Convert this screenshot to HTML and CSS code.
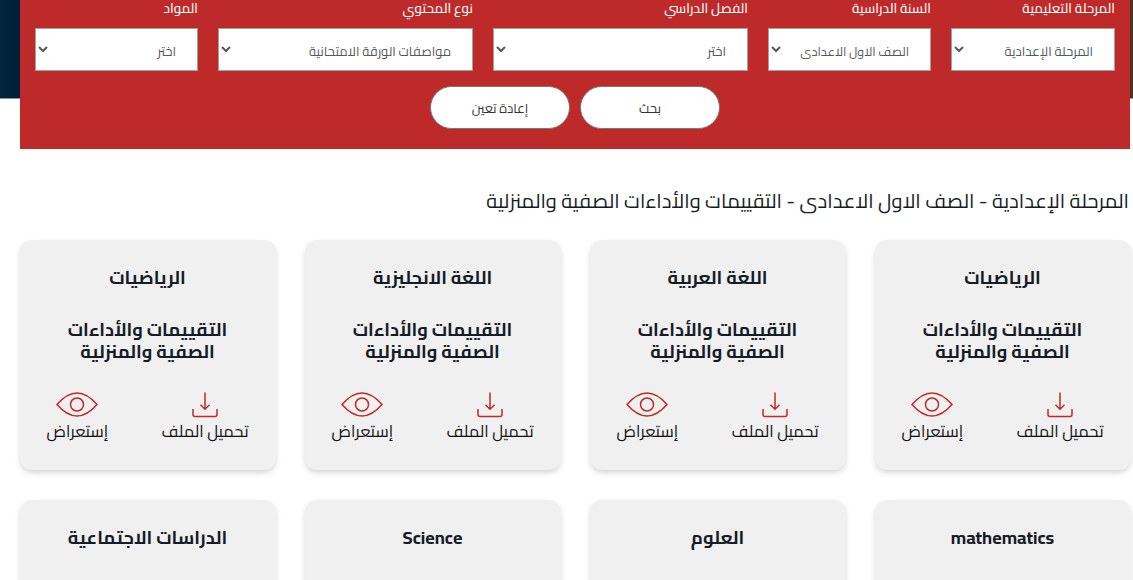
FILE: index.html
```html
<!DOCTYPE html>
<html lang="ar" dir="rtl">
<head>
  <meta charset="UTF-8">
  <meta name="viewport" content="width=device-width, initial-scale=1.0">
  <title>التقييمات والأداءات الصفية والمنزلية</title>
  <link rel="stylesheet" href="styles.css">
</head>
<body>
  <svg class="sprite" width="0" height="0">
    <symbol id="download" viewBox="0 0 26 26">
      <path d="M13 0.5V17M8.5 12.8L13 17.3L17.5 12.8M1 17V22.5Q1 24.5 3 24.5H23Q25 24.5 25 22.5V17"/>
    </symbol>
    <symbol id="eye" viewBox="0 0 42 26">
      <path d="M1 12.5Q11 1 21 1Q31 1 41 12.5Q31 24 21 24Q11 24 1 12.5Z"/>
      <circle cx="21" cy="12.5" r="6.5"/>
    </symbol>
  </svg>

  <!-- البحث -->
  <div class="hero">
    <form class="search">
      <div class="fields">
        <div class="field">
          <label>المرحلة التعليمية</label>
          <select><option>المرحلة الإعدادية</option></select>
        </div>
        <div class="field">
          <label>السنة الدراسية</label>
          <select class="year"><option>الصف الاول الاعدادى</option></select>
        </div>
        <div class="field">
          <label>الفصل الدراسي</label>
          <select><option>اختر</option></select>
        </div>
        <div class="field">
          <label>نوع المحتوي</label>
          <select><option>مواصفات الورقة الامتحانية</option></select>
        </div>
        <div class="field">
          <label>المواد</label>
          <select><option>اختر</option></select>
        </div>
      </div>
      <div class="buttons">
        <button type="button">بحث</button>
        <button type="button">إعادة تعين</button>
      </div>
    </form>
  </div>

  <!-- النتائج -->
  <h1 class="title">المرحلة الإعدادية - الصف الاول الاعدادى - التقييمات والأداءات الصفية والمنزلية</h1>

  <div class="grid">
    <div class="card">
      <h2>الرياضيات</h2>
      <h3>التقييمات والأداءات الصفية والمنزلية</h3>
      <div class="actions">
        <a class="download"><svg width="26" height="26"><use href="#download"/></svg><span>تحميل الملف</span></a>
        <a class="view"><svg width="42" height="26"><use href="#eye"/></svg><span>إستعراض</span></a>
      </div>
    </div>
    <div class="card">
      <h2>اللغة العربية</h2>
      <h3>التقييمات والأداءات الصفية والمنزلية</h3>
      <div class="actions">
        <a class="download"><svg width="26" height="26"><use href="#download"/></svg><span>تحميل الملف</span></a>
        <a class="view"><svg width="42" height="26"><use href="#eye"/></svg><span>إستعراض</span></a>
      </div>
    </div>
    <div class="card">
      <h2>اللغة الانجليزية</h2>
      <h3>التقييمات والأداءات الصفية والمنزلية</h3>
      <div class="actions">
        <a class="download"><svg width="26" height="26"><use href="#download"/></svg><span>تحميل الملف</span></a>
        <a class="view"><svg width="42" height="26"><use href="#eye"/></svg><span>إستعراض</span></a>
      </div>
    </div>
    <div class="card">
      <h2>الرياضيات</h2>
      <h3>التقييمات والأداءات الصفية والمنزلية</h3>
      <div class="actions">
        <a class="download"><svg width="26" height="26"><use href="#download"/></svg><span>تحميل الملف</span></a>
        <a class="view"><svg width="42" height="26"><use href="#eye"/></svg><span>إستعراض</span></a>
      </div>
    </div>
    <div class="card"><h2>mathematics</h2></div>
    <div class="card"><h2>العلوم</h2></div>
    <div class="card"><h2>Science</h2></div>
    <div class="card"><h2>الدراسات الاجتماعية</h2></div>
  </div>
</body>
</html>
```
FILE: styles.css
```css
* {
  margin: 0;
  padding: 0;
  box-sizing: border-box;
}

body {
  height: 580px;
  overflow: hidden;
  background: #fff;
  color: #161c26;
  font-family: 'Cairo', 'DejaVu Sans', sans-serif;
}

.sprite {
  display: block;
}

/* البحث */
.hero {
  height: 149px;
  padding: 0 3px 0 20px;
  background: linear-gradient(to right, #00263d, #002036 20px, #4b3528 1120px) no-repeat top / 100% 98.5px;
}

.search {
  height: 149px;
  padding: 0 15px;
  background: #be2a29;
}

.fields {
  display: grid;
  grid-template-columns: 164fr 163fr 255fr 255fr 163fr;
  gap: 20px;
}

.field label {
  display: block;
  height: 28px;
  line-height: 18px;
  font-size: 13.4px;
  font-weight: 500;
  color: #fff;
  white-space: nowrap;
}

.field select {
  display: block;
  width: 100%;
  height: 43px;
  padding: 3px 17px 0 0;
  border: 1px solid #a5a0a0;
  border-radius: 0;
  background: #fff;
  color: #55595c;
  font-family: inherit;
  font-size: 13px;
}

.field .year {
  font-size: 12.5px;
}

.buttons {
  display: flex;
  justify-content: center;
  gap: 10px;
  margin-top: 15px;
}

.buttons button {
  width: 140px;
  height: 43px;
  border: 1px solid #777;
  border-radius: 22px;
  background: #fff;
  color: #333;
  font-family: inherit;
  font-size: 13px;
}

.title {
  height: 91px;
  padding: 37px 4px 0 0;
  line-height: 30px;
  font-size: 20.1px;
  font-weight: 400;
  white-space: nowrap;
}

/* الكروت */
.grid {
  display: grid;
  grid-template-columns: repeat(4, 256px);
  gap: 30px 29px;
  padding-right: 2.5px;
}

.card {
  height: 230px;
  padding: 26px 43px 0;
  border-radius: 12px;
  background: #f0f0f0;
  box-shadow: 0 3px 6px -1px rgba(0, 0, 0, 0.2);
  text-align: center;
}

.card h2 {
  height: 52px;
  line-height: 22px;
  font-size: 18.2px;
  font-weight: 700;
  white-space: nowrap;
}

.card h3 {
  line-height: 22px;
  font-size: 18.2px;
  font-weight: 700;
}

.actions {
  display: flex;
  justify-content: space-between;
  margin: 30px -16px 0;
}

.actions a {
  display: flex;
  flex-direction: column;
  align-items: center;
  line-height: 27px;
  font-size: 16.3px;
  color: #111;
  white-space: nowrap;
}

.actions svg {
  fill: none;
  stroke: #be2a29;
  stroke-width: 1.5;
}
```
